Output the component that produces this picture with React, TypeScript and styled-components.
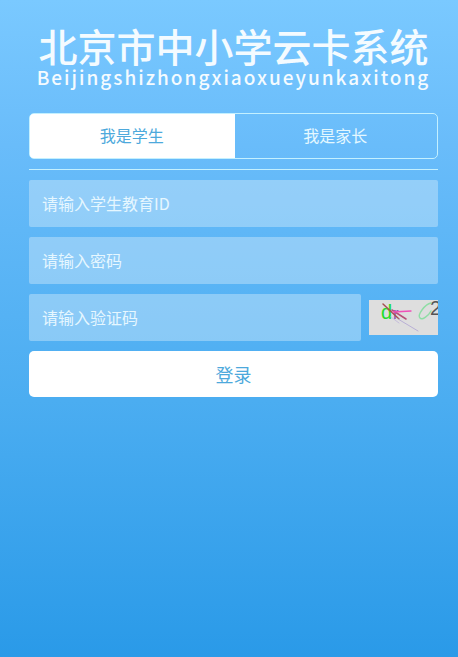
import React, { useState } from 'react';
import styled, { createGlobalStyle } from 'styled-components';

const GlobalStyle = createGlobalStyle`
  *, *::before, *::after { box-sizing: border-box; }
  body {
    margin: 0;
    font-family: "Noto Sans CJK SC", sans-serif;
  }
  button, input { font: inherit; }
`;

const Page = styled.main`
  min-height: 100vh;
  padding: 26px 20px 20px 29px;
  background: linear-gradient(#7ac9ff, #69bcfa 22%, #4badf1 61%, #2a9ae8);
`;

const Brand = styled.header`
  display: flex;
  flex-direction: column;
  align-items: center;
  margin-bottom: 24px;
  color: #f4fbff;
  white-space: nowrap;
`;

const Title = styled.h1`
  margin: 0;
  font-size: 39px;
  font-weight: 500;
  line-height: 38px;
`;

const Pinyin = styled.p`
  margin: 0;
  font-size: 19px;
  font-weight: 500;
  line-height: 25px;
  letter-spacing: 2px;
`;

const Tabs = styled.div`
  display: flex;
  height: 46px;
  border: 1px solid #c3f0ff;
  border-radius: 5px;
  overflow: hidden;
`;

const Tab = styled.button<{ $active: boolean }>`
  flex: 1;
  padding: 0 0 2px;
  border: 0;
  font-size: 16px;
  cursor: pointer;
  color: ${({ $active }) => ($active ? '#4da9dc' : '#e4f8ff')};
  background: ${({ $active }) => ($active ? '#fff' : 'transparent')};
  box-shadow: ${({ $active }) => ($active ? '0 0 0 1px #fff' : 'none')};
`;

const Divider = styled.hr`
  height: 1px;
  margin: 10px 0;
  border: 0;
  background: #c3f0ff;
`;

const Form = styled.form`
  display: flex;
  flex-direction: column;
  gap: 10px;
`;

const Field = styled.input`
  flex: 1;
  width: 100%;
  min-width: 0;
  min-height: 47px;
  padding: 0 13px 2px;
  border: 0;
  border-radius: 2px;
  outline: none;
  color: #fff;
  font-size: 16px;
  background: rgba(215, 235, 250, 0.42);
  &::placeholder { color: #e6f7ff; opacity: 1; }
`;

const CodeRow = styled.div`
  display: flex;
  align-items: center;
  gap: 8px;
`;

const CaptchaButton = styled.button`
  flex: none;
  width: 69px;
  height: 35px;
  padding: 0;
  border: 0;
  cursor: pointer;
  background: #dedede;
  svg { display: block; }
`;

const Submit = styled.button`
  height: 46px;
  border: 0;
  border-radius: 5px;
  color: #4da9dc;
  font-size: 18px;
  background: #fff;
  cursor: pointer;
`;

function Captcha() {
  return (
    <svg width="69" height="35" viewBox="0 0 69 35" aria-hidden="true">
      <g fontFamily="Liberation Sans, sans-serif">
        <text x="12" y="19" fontSize="20" fill="#20dc28">d</text>
        <text x="24" y="19" fontSize="17" fill="#8a55b0">r</text>
        <text x="61" y="15" fontSize="20" fill="#555">2</text>
      </g>
      <g fill="none" strokeLinecap="round">
        <path d="M14 4L30 19" stroke="#a75050" strokeWidth="1.5" />
        <path d="M23 10L37 19" stroke="#b84f78" strokeWidth="1.5" />
        <path d="M24 12L42 11" stroke="#f050b8" strokeWidth="1.3" />
        <path d="M22 17L30 23" stroke="#c5bddb" />
        <path d="M29 19L49 31" stroke="#b9b0d6" />
        <path d="M62 3C56 4 48 15 51 18C53 21 60 15 62 11" stroke="#8fdda5" strokeWidth="1.4" />
      </g>
    </svg>
  );
}

const roles = ['我是学生', '我是家长'];

export default function App() {
  const [role, setRole] = useState(0);
  return (
    <>
      <GlobalStyle />
      <Page>
        <Brand>
          <Title>北京市中小学云卡系统</Title>
          <Pinyin>Beijingshizhongxiaoxueyunkaxitong</Pinyin>
        </Brand>
        <Tabs role="tablist">
          {roles.map((label, i) => (
            <Tab
              key={label}
              type="button"
              role="tab"
              aria-selected={role === i}
              $active={role === i}
              onClick={() => setRole(i)}
            >
              {label}
            </Tab>
          ))}
        </Tabs>
        <Divider />
        <Form onSubmit={(e: React.FormEvent) => e.preventDefault()}>
          <Field type="text" aria-label="教育ID" placeholder="请输入学生教育ID" />
          <Field type="password" aria-label="密码" placeholder="请输入密码" />
          <CodeRow>
            <Field type="text" aria-label="验证码" placeholder="请输入验证码" />
            <CaptchaButton type="button" aria-label="刷新验证码">
              <Captcha />
            </CaptchaButton>
          </CodeRow>
          <Submit type="submit">登录</Submit>
        </Form>
      </Page>
    </>
  );
}
